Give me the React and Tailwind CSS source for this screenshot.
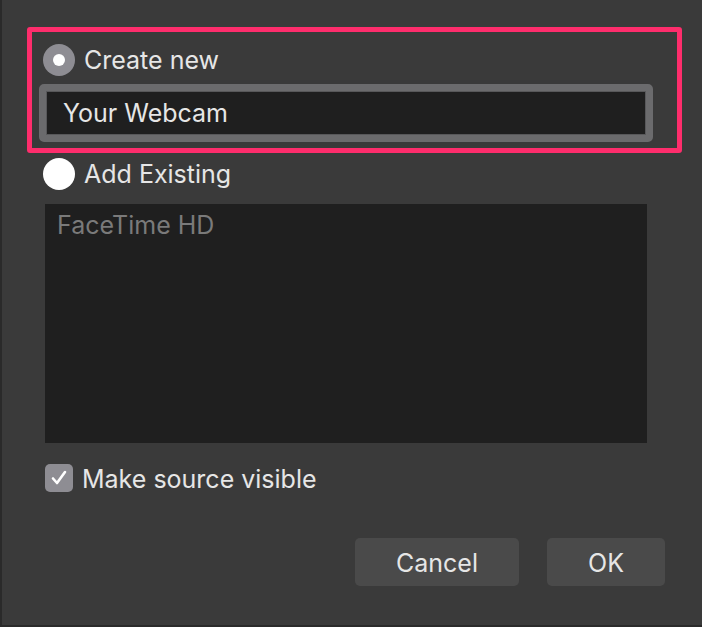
import React from 'react';

function Radio({ checked }) {
    if (checked) {
        return (
            <div className="flex h-[32px] w-[32px] shrink-0 items-center justify-center rounded-full bg-[#8e8d93]">
                <div className="h-[12px] w-[12px] rounded-full bg-white" />
            </div>
        );
    }
    return <div className="h-[32px] w-[32px] shrink-0 rounded-full bg-white" />;
}

function Checkbox() {
    return (
        <div className="flex h-[28px] w-[28px] shrink-0 items-center justify-center rounded-[5px] bg-[#8e8d93]">
            <svg width="20" height="20" viewBox="0 0 20 20" fill="none">
                <path d="M4 10.5 L8 15 L16 4" stroke="white" strokeWidth="2.6" strokeLinecap="round" strokeLinejoin="round" />
            </svg>
        </div>
    );
}

export default function App() {
    return (
        <div
            className="h-[627px] w-[702px] border-b-2 border-l-2 border-[#2a2a2a] bg-[#3a3a3a] pl-[25px] pt-[27px] text-[#e6e6e6]"
            style={{ fontFamily: 'Inter, "Liberation Sans", sans-serif' }}
        >
            <div className="flex h-[126px] w-[655px] flex-col rounded-[3px] border-[5px] border-[#fe2d6c]">
                <div className="ml-[11px] mt-[12px] flex items-center gap-[9px]">
                    <Radio checked />
                    <span className="text-[25px] leading-none">Create new</span>
                </div>
                <div className="ml-[7px] mt-[8px] h-[58px] w-[614px] rounded-[5px] border-[7px] border-[#6b6b6d]">
                    <div className="flex h-full items-center border border-[#58585a] bg-[#1f1f1f] pl-[16px] text-[25px] leading-none">
                        Your Webcam
                    </div>
                </div>
            </div>

            <div className="ml-[16px] mt-[5px] flex items-center gap-[9px]">
                <Radio />
                <span className="text-[25px] leading-none">Add Existing</span>
            </div>

            <div className="ml-[18px] mt-[14px] h-[239px] w-[602px] bg-[#1f1f1f] px-[12px] pt-[9px]">
                <span className="text-[25px] leading-none text-[#7a7a7a]">FaceTime HD</span>
            </div>

            <div className="ml-[18px] mt-[21px] flex items-center gap-[9px]">
                <Checkbox />
                <span className="mt-[2px] text-[25px] leading-none">Make source visible</span>
            </div>

            <div className="ml-[328px] mt-[46px] flex gap-[28px]">
                <button className="flex h-[48px] w-[164px] items-center justify-center rounded-[5px] bg-[#4a4a4a] pt-[3px] text-[25px] leading-none text-[#e6e6e6]">
                    Cancel
                </button>
                <button className="flex h-[48px] w-[118px] items-center justify-center rounded-[5px] bg-[#4a4a4a] pt-[3px] text-[25px] leading-none text-[#e6e6e6]">
                    OK
                </button>
            </div>
        </div>
    );
}
